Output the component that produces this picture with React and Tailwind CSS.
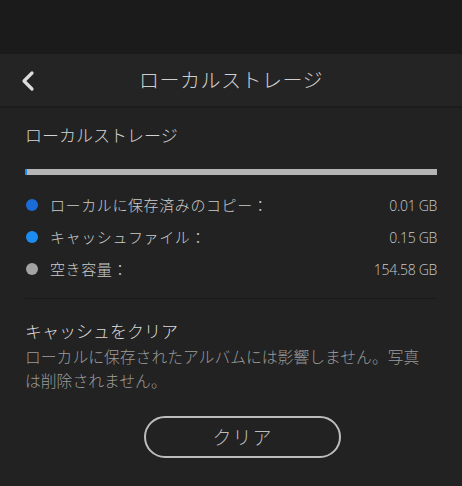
import React from 'react';

const rows = [
  { label: 'ローカルに保存済みのコピー：', value: '0.01 GB', dot: 'bg-[#1b6bd6]' },
  { label: 'キャッシュファイル：', value: '0.15 GB', dot: 'bg-[#1d8cf0]' },
  { label: '空き容量：', value: '154.58 GB', dot: 'bg-[#a3a3a3]' },
];

export default function App() {
  return (
    <div className="w-[462px] h-[486px] bg-[#222222] overflow-hidden font-light font-['Noto_Sans_CJK_JP',sans-serif]">
      {/* status area */}
      <div className="h-[54px] bg-[#1b1b1b]" />

      {/* header */}
      <div className="relative h-[54px] bg-[#242424] border-b-2 border-[#1c1c1c] flex items-center justify-center">
        <svg className="absolute left-[20px] top-[16px]" width="16" height="22" viewBox="0 0 16 22">
          <path d="M12 3 L4 11 L12 19" fill="none" stroke="#dcdcdc" strokeWidth="3.2" strokeLinecap="round" strokeLinejoin="round" />
        </svg>
        <span className="text-[20px] text-[#cfcfcf] tracking-[0.5px]">ローカルストレージ</span>
      </div>

      {/* content */}
      <div className="px-[25px] pt-[14px]">
        <div className="text-[17px] text-[#d4d4d4] leading-[26px]">ローカルストレージ</div>

        <div className="mt-[21px] h-[6px] bg-[#b5b5b5] flex">
          <div className="w-[2px] h-full bg-[#1d8cf0]" />
        </div>

        <div className="mt-[18px] flex flex-col gap-[8px]">
          {rows.map((r) => (
            <div key={r.label} className="flex items-center h-[24px]">
              <span className={`w-[12px] h-[12px] rounded-full ${r.dot} ml-[1px] mr-[12px]`} />
              <span className="text-[15px] text-[#cbcbcb] tracking-[0.6px]">{r.label}</span>
              <span className="ml-auto text-[14px] text-[#cbcbcb] font-['Open_Sans',sans-serif] tracking-[-0.3px]">{r.value}</span>
            </div>
          ))}
        </div>

        <div className="mt-[17px] h-px bg-[#1a1a1a]" />

        <div className="mt-[19px] text-[17px] text-[#dadada] leading-[26px]">キャッシュをクリア</div>
        <p className="mt-[1px] w-[405px] text-[15.8px] text-[#9a9a9a] leading-[24px]">
          ローカルに保存されたアルバムには影響しません。写真は削除されません。
        </p>

        <div className="mt-[23px] pl-[119px] flex">
          <button className="w-[197px] h-[42px] rounded-full border-2 border-[#bdbdbd] text-[19px] text-[#bdbdbd] tracking-[1px] flex items-center justify-center">
            クリア
          </button>
        </div>
      </div>
    </div>
  );
}
